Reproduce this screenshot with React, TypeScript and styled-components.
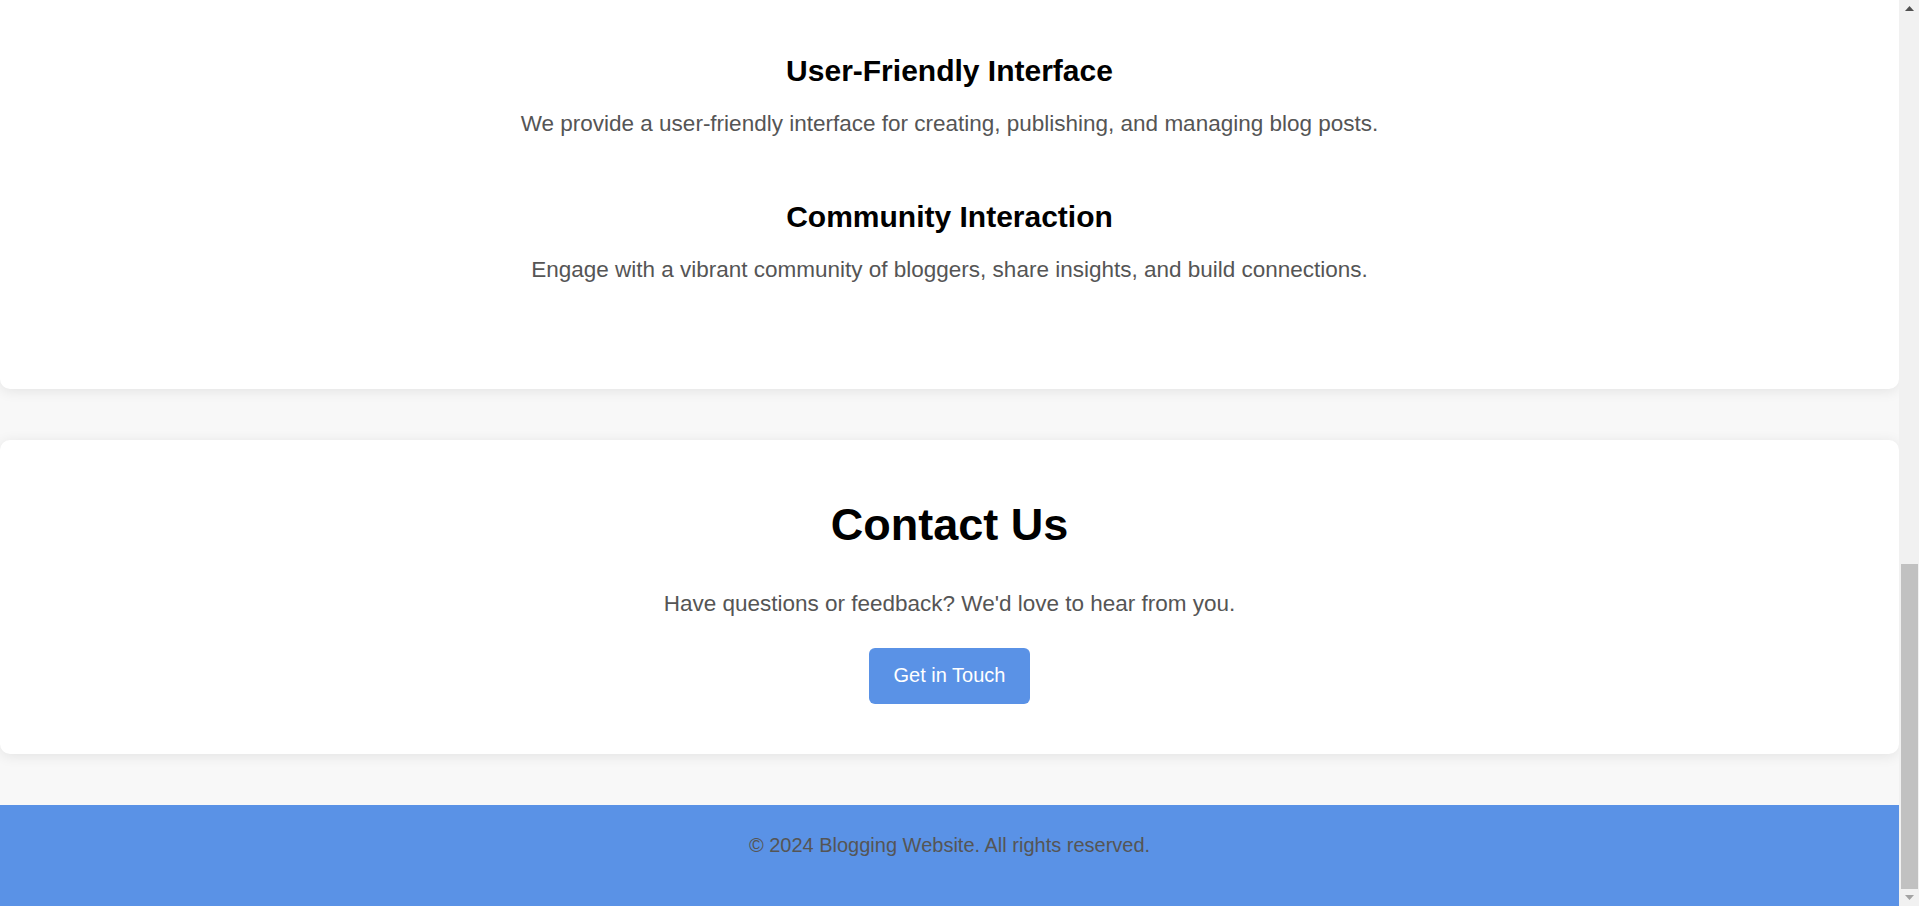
import React from "react";
import styled, { createGlobalStyle } from "styled-components";

const BLUE = "#5a92e6";
const TEXT_GREY = "#555555";
const SCROLL_TRACK = "#f1f1f1";

const GlobalStyle = createGlobalStyle`
  html, body {
    height: 100%;
  }

  body {
    margin: 0;
    overflow: hidden;
    background-color: #f8f8f8;
    color: #333333;
    font-family: "Liberation Sans", Arial, sans-serif;
  }

  #root {
    height: 100%;
  }
`;

const Window = styled.div`
  display: flex;
  height: 100%;
`;

const Page = styled.div`
  display: flex;
  flex-direction: column;
  flex: 1;
  min-width: 0;
`;

const Main = styled.main`
  display: flex;
  flex-direction: column;
  gap: 51px;
  padding-bottom: 51px;
`;

// the features card continues above the top of the window, so it only has bottom corners
const Card = styled.section<{ $cutTop?: boolean }>`
  display: flex;
  flex-direction: column;
  align-items: center;
  padding: ${(p) => (p.$cutTop ? "53px 25px 106px" : "59px 25px 50px")};
  background-color: #ffffff;
  border-radius: ${(p) => (p.$cutTop ? "0 0 10px 10px" : "10px")};
  box-shadow: 0 2px 14px rgba(0, 0, 0, 0.09);
  text-align: center;
`;

const SectionTitle = styled.h2`
  margin: 0 0 40px;
  color: #000000;
  font-size: 45px;
  line-height: 52px;
  font-weight: 700;
`;

const BodyText = styled.p`
  margin: 0;
  color: ${TEXT_GREY};
  font-size: 22.5px;
  line-height: 26px;
`;

const FeatureList = styled.div`
  display: flex;
  flex-direction: column;
  gap: 61.5px;
`;

const Feature = styled.article`
  display: flex;
  flex-direction: column;
  gap: 23px;
`;

const FeatureTitle = styled.h3`
  margin: 0;
  color: #000000;
  font-size: 30px;
  line-height: 35px;
  font-weight: 700;
`;

const Button = styled.button`
  height: 56px;
  margin-top: 31px;
  padding: 0 25px;
  border: none;
  border-radius: 6px;
  background-color: ${BLUE};
  color: #ffffff;
  font-family: inherit;
  font-size: 20px;
  cursor: pointer;
`;

const Footer = styled.footer`
  flex: 1;
  padding: 29px 0 49px;
  background-color: ${BLUE};
  text-align: center;
`;

const FooterText = styled.p`
  margin: 0;
  color: ${TEXT_GREY};
  font-size: 20px;
  line-height: 23px;
`;

const ScrollBar = styled.div`
  display: flex;
  flex-direction: column;
  flex: 0 0 20px;
  background-color: ${SCROLL_TRACK};
`;

const ScrollArrow = styled.div`
  display: flex;
  align-items: center;
  justify-content: center;
  height: 17px;
`;

const ScrollTrack = styled.div`
  display: flex;
  flex-direction: column;
  justify-content: flex-end;
  flex: 1;
  padding: 0 1px 0 2px;
`;

const ScrollThumb = styled.div`
  height: 325px;
  background-color: #c1c1c1;
`;

const Arrow = ({ up, colour }: { up?: boolean; colour: string }) => (
  <svg width="9" height="5" viewBox="0 0 9 5">
    <polygon points={up ? "0,5 4.5,0 9,5" : "0,0 4.5,5 9,0"} fill={colour} />
  </svg>
);

const features = [
  {
    title: "User-Friendly Interface",
    text: "We provide a user-friendly interface for creating, publishing, and managing blog posts."
  },
  {
    title: "Community Interaction",
    text: "Engage with a vibrant community of bloggers, share insights, and build connections."
  }
];

export default function App() {
  return (
    <Window>
      <GlobalStyle />
      <Page>
        <Main>
          <Card $cutTop>
            <FeatureList>
              {features.map((f) => (
                <Feature key={f.title}>
                  <FeatureTitle>{f.title}</FeatureTitle>
                  <BodyText>{f.text}</BodyText>
                </Feature>
              ))}
            </FeatureList>
          </Card>

          <Card>
            <SectionTitle>Contact Us</SectionTitle>
            <BodyText>Have questions or feedback? We'd love to hear from you.</BodyText>
            <Button>Get in Touch</Button>
          </Card>
        </Main>

        <Footer>
          <FooterText>© 2024 Blogging Website. All rights reserved.</FooterText>
        </Footer>
      </Page>

      <ScrollBar>
        <ScrollArrow>
          <Arrow up colour="#505050" />
        </ScrollArrow>
        <ScrollTrack>
          <ScrollThumb />
        </ScrollTrack>
        <ScrollArrow>
          <Arrow colour="#a3a3a3" />
        </ScrollArrow>
      </ScrollBar>
    </Window>
  );
}
